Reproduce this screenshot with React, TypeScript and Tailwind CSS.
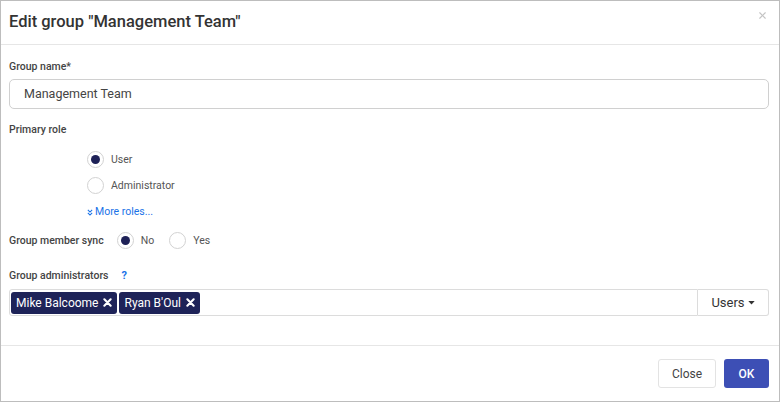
import { X } from "lucide-react";

function Radio({ checked, label }: { checked?: boolean; label: string }) {
  return (
    <div className="flex items-center">
      <span className="flex h-[17px] w-[17px] items-center justify-center rounded-full border border-[#d2d2d2] bg-white">
        {checked && <span className="h-[9px] w-[9px] rounded-full bg-[#1e2157]" />}
      </span>
      <span className="ml-[7px] text-[10.5px] text-[#555]">{label}</span>
    </div>
  );
}

function Tag({ name }: { name: string }) {
  return (
    <span className="flex h-[22px] items-center gap-[5px] rounded-[3px] bg-[#1e2358] px-[5px] text-[12px] text-white">
      {name}
      <svg width="9" height="9" viewBox="0 0 10 10">
        <path d="M1.5 1.5 L8.5 8.5 M8.5 1.5 L1.5 8.5" stroke="white" strokeWidth="2.3" strokeLinecap="round" />
      </svg>
    </span>
  );
}

export default function App() {
  return (
    <div
      className="flex h-[402px] w-[780px] flex-col border border-[#bdbdbd] bg-white text-[#333]"
      style={{ fontFamily: "Roboto, 'Liberation Sans', sans-serif" }}
    >
      {/* header */}
      <div className="flex h-[44px] shrink-0 items-center justify-between border-b border-[#e6e6e6] pl-2 pr-[11px]">
        <h1 className="text-[16.5px] font-medium text-[#333]">Edit group "Management Team"</h1>
        <X size={11} strokeWidth={2.5} className="mb-[15px] text-[#c4c4c4]" />
      </div>

      {/* body */}
      <div className="flex flex-1 flex-col pl-2 pr-[10px] pt-[14px]">
        <label className="text-[10.5px] font-medium leading-[16px] text-[#444]">Group name*</label>
        <div className="mt-[4px] flex h-[30px] items-center rounded-[5px] border border-[#d0d0d0] pl-[14px] text-[12.5px] text-[#444]">
          Management Team
        </div>

        <label className="mt-[13px] text-[10.5px] font-medium leading-[16px] text-[#444]">Primary role</label>
        <div className="ml-[78px] mt-[13px] flex flex-col gap-[9px]">
          <Radio checked label="User" />
          <Radio label="Administrator" />
        </div>
        <a className="ml-[78px] mt-[10px] flex items-center text-[10.5px] leading-[16px] text-[#1a73e8]">
          <svg width="6" height="7" viewBox="0 0 7 8" className="mr-[2px]">
            <path d="M1 1 L3.5 3.5 L6 1 M1 4.5 L3.5 7 L6 4.5" fill="none" stroke="#1a73e8" strokeWidth="1.3" />
          </svg>
          More roles...
        </a>

        <div className="mt-[12px] flex h-[17px] items-center">
          <span className="mr-[13px] text-[10.5px] font-medium text-[#444]">Group member sync</span>
          <div className="flex gap-[15px]">
            <Radio checked label="No" />
            <Radio label="Yes" />
          </div>
        </div>

        <div className="mt-[19px] flex items-center text-[10.5px] font-medium leading-[16px] text-[#444]">
          Group administrators
          <span className="ml-[13px] text-[11px] font-bold text-[#1a73e8]">?</span>
        </div>

        <div className="mt-[5px] flex h-[27px]">
          <div className="flex flex-1 items-center gap-[2px] rounded-l-[3px] border border-[#dcdcdc] pl-[1px]">
            <Tag name="Mike Balcoome" />
            <Tag name="Ryan B'Oul" />
          </div>
          <button className="flex w-[71px] items-center justify-center gap-[3px] rounded-r-[3px] border border-l-0 border-[#dcdcdc] text-[13px] text-[#333]">
            Users
            <svg width="7" height="4" viewBox="0 0 8 5">
              <path d="M0 0 L8 0 L4 4.5 Z" fill="#333" />
            </svg>
          </button>
        </div>
      </div>

      {/* footer */}
      <div className="flex h-[56px] shrink-0 items-center justify-end gap-[8px] border-t border-[#e6e6e6] pr-[10px]">
        <button className="h-[29px] w-[58px] rounded-[3px] border border-[#e3e3e3] bg-white text-[12px] text-[#444]">
          Close
        </button>
        <button className="h-[29px] w-[45px] rounded-[3px] bg-[#3d4fb5] text-[12px] font-medium text-white">
          OK
        </button>
      </div>
    </div>
  );
}
